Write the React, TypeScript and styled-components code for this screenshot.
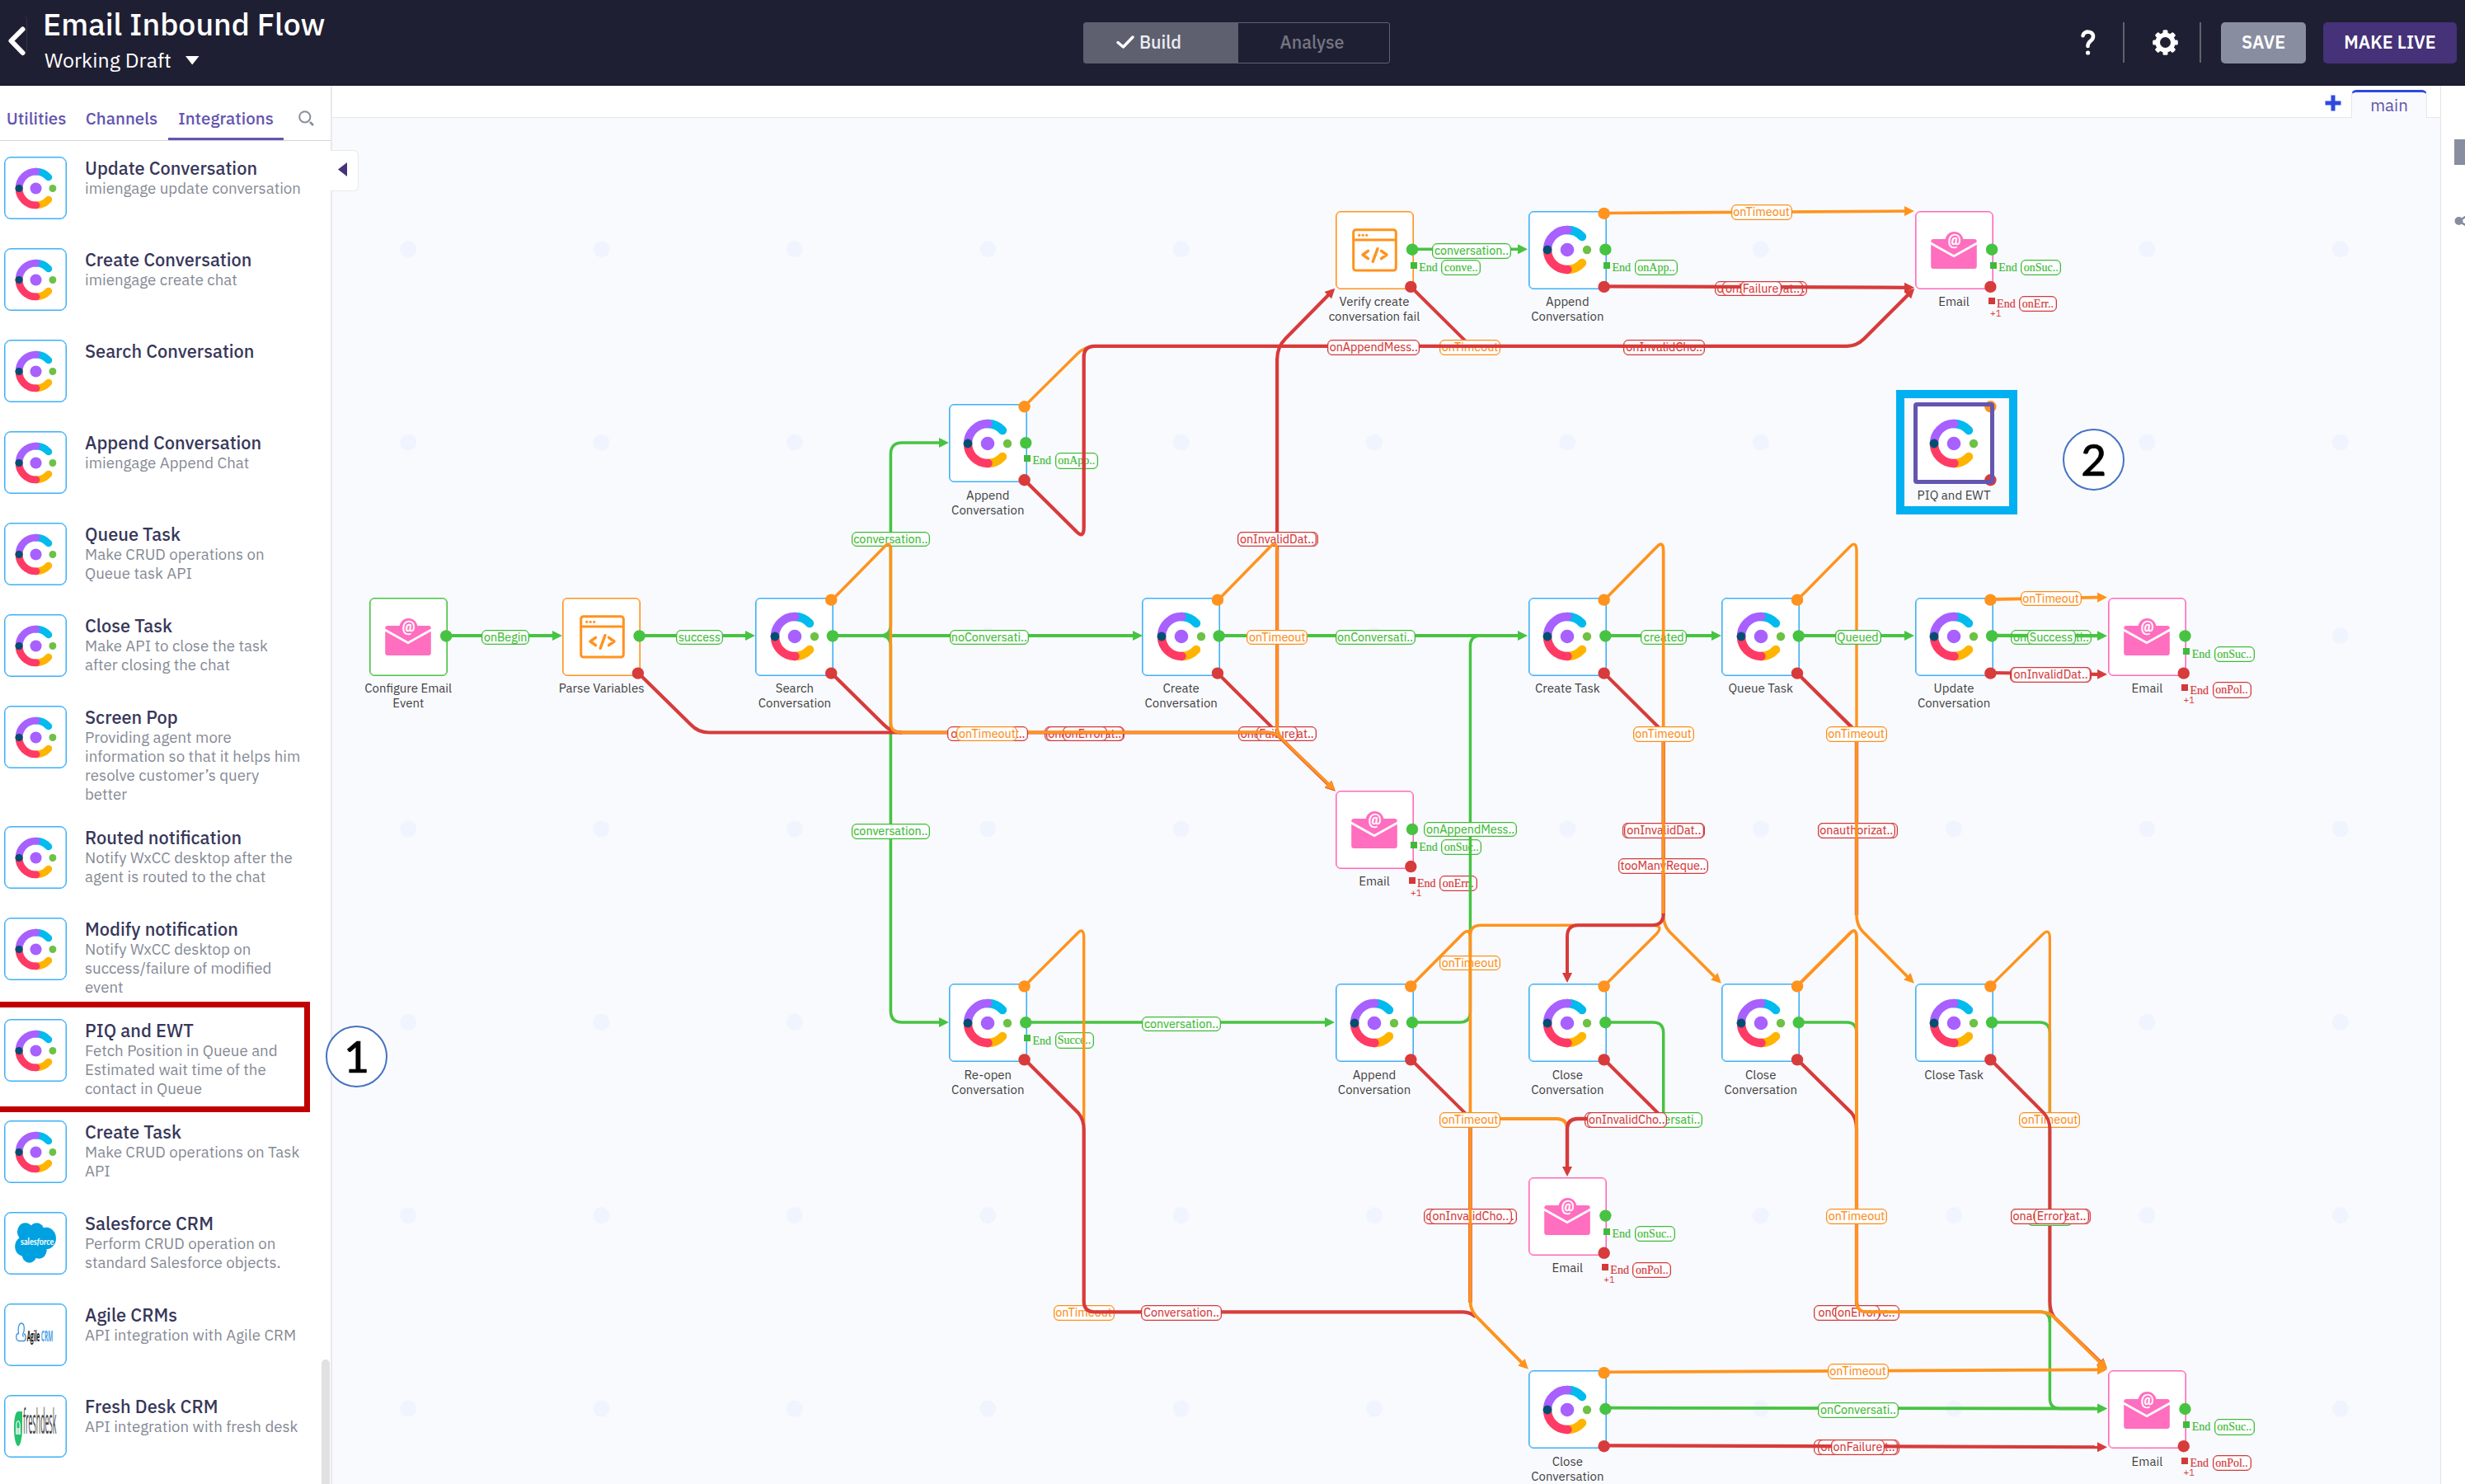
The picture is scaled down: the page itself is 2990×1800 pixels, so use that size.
import React from "react";
import styled, { createGlobalStyle, css } from "styled-components";

const GREEN = "#47c342";
const ORANGE = "#ff931e";
const RED = "#d83b3b";
const PILL_RED = "#d2393c";
const PINK = "#ff69bd";
const BLUE = "#3eb0f7";
const PURPLE = "#6355b0";

const Global = createGlobalStyle`
  html, body { margin: 0; padding: 0; background: #fff; }
  body { font-family: "IBM Plex Sans", Roboto, "Liberation Sans", sans-serif; overflow: hidden; }
  * { box-sizing: border-box; }
`;

const Page = styled.div`
  display: flex;
  flex-direction: column;
  width: 2990px;
  height: 1800px;
  overflow: hidden;
`;

/* ---------- header ---------- */

const Header = styled.header`
  display: grid;
  grid-template-columns: 1314px 372px 1fr;
  align-items: center;
  height: 104px;
  flex: none;
  background: #1f1f33;
  border-bottom: 1px solid #14142b;
  color: #fff;
`;
const HeaderLeft = styled.div`
  display: flex;
  height: 103px;
`;
const BackButton = styled.div`
  width: 33px;
  height: 48px;
  margin: 18px 19px 0 0;
  padding: 13px 0 0 9px;
  border-right: 1px solid #34344a;
  border-radius: 0 6px 6px 0;
`;
const FlowTitle = styled.h1`
  margin: 6px 0 0;
  font-size: 37.4px;
  line-height: 46px;
  font-weight: 500;
  white-space: nowrap;
`;
const DraftRow = styled.div`
  display: flex;
  align-items: center;
  gap: 17px;
  padding-left: 2px;
  margin-top: 6px;
  font-size: 25px;
  line-height: 30px;
`;
const Toggle = styled.div`
  display: grid;
  grid-template-columns: 187px 1fr;
  height: 50px;
  border: 1.4px solid #5e6070;
  border-radius: 3px;
  font-size: 21.5px;
  font-weight: 500;
  line-height: 47px;
`;
const ToggleItem = styled.div<{ $active?: boolean }>`
  display: flex;
  align-items: center;
  justify-content: center;
  gap: 6px;
  padding-right: ${(p) => (p.$active ? "30px" : "4px")};
  background: ${(p) => (p.$active ? "#5e6070" : "transparent")};
  color: ${(p) => (p.$active ? "#ededf0" : "#757582")};
`;
const HeaderRight = styled.div`
  display: flex;
  align-items: center;
  justify-content: flex-end;
  padding-right: 10px;
  height: 50px;
`;
const Divider = styled.i`
  width: 2px;
  height: 49px;
  background: #62626d;
`;
const IconSlot = styled.div<{ $l: number; $r: number }>`
  display: flex;
  margin: 0 ${(p) => p.$r}px 0 ${(p) => p.$l}px;
`;
const HeaderButton = styled.button<{ $bg: string; $w: number }>`
  width: ${(p) => p.$w}px;
  height: 50px;
  margin-left: 21px;
  padding: 0 0 1px;
  border: 0;
  border-radius: 5px;
  background: ${(p) => p.$bg};
  color: #fff;
  font-family: inherit;
  font-size: 21.5px;
  font-weight: 600;
`;

/* ---------- sidebar ---------- */

const Body = styled.div`
  display: flex;
  flex: 1;
  min-height: 0;
`;
const Sidebar = styled.aside`
  position: relative;
  width: 403px;
  flex: none;
  border-right: 2px solid #e9e9ec;
  background: #fff;
`;
const Tabs = styled.nav`
  display: flex;
  height: 67px;
  border-bottom: 1px solid #d6d6da;
`;
const Tab = styled.div<{ $w: number; $active?: boolean }>`
  width: ${(p) => p.$w}px;
  padding-top: 26px;
  height: 66px;
  font-size: 20.5px;
  line-height: 28px;
  font-weight: 500;
  text-align: center;
  color: ${PURPLE};
  border-bottom: 3px solid ${(p) => (p.$active ? PURPLE : "transparent")};
`;
const ChannelsTab = styled(Tab)`
  padding-left: 3px;
`;
const SearchSlot = styled.div`
  padding: 30px 0 0 18px;
`;
const Items = styled.div`
  padding-top: 19px;
`;
const Item = styled.div`
  display: flex;
  min-height: 111px;
  padding-left: 5px;
`;
const ItemIcon = styled.div`
  display: flex;
  align-items: center;
  justify-content: center;
  flex: none;
  width: 76px;
  height: 76px;
  border: 1px solid ${BLUE};
  box-shadow: inset 0 0 0 0.5px ${BLUE};
  border-radius: 8px;
  background: #fff;
`;
const ItemText = styled.div`
  margin-left: 22px;
  padding: 1px 0 26.6px;
`;
const ItemTitle = styled.div`
  height: 25.8px;
  font-size: 21.8px;
  line-height: 27px;
  font-weight: 500;
  color: #37375a;
  white-space: nowrap;
`;
const ItemDesc = styled.div`
  font-size: 18.7px;
  line-height: 23.2px;
  color: #868a95;
  white-space: pre;
`;
const Highlight = styled.div`
  position: absolute;
  left: -10px;
  top: 1111px;
  width: 386px;
  height: 134px;
  border: 7px solid #c00000;
`;
const Thumb = styled.div`
  position: absolute;
  left: 390px;
  top: 1545px;
  width: 10px;
  height: 170px;
  border-radius: 5px;
  background: #e1e1e1;
`;
const Collapse = styled.div`
  position: absolute;
  z-index: 5;
  left: 401px;
  top: 78px;
  width: 34px;
  height: 50px;
  padding: 14px 0 0 9px;
  background: #fff;
  border: 1.5px solid #e9e9ec;
  border-left: 0;
  border-radius: 0 6px 6px 0;
`;

/* ---------- canvas ---------- */

const Main = styled.main`
  display: flex;
  flex-direction: column;
  width: 2557px;
  flex: none;
`;
const FlowTabs = styled.div`
  display: flex;
  align-items: flex-end;
  justify-content: flex-end;
  height: 39px;
  padding-right: 16px;
  border-bottom: 1px solid #e7e7ea;
`;
const PlusSlot = styled.div`
  display: flex;
  margin: 0 12px 7px 0;
`;
const FlowTab = styled.div`
  width: 92px;
  height: 34px;
  margin-bottom: -1px;
  border: 1px solid #e7e7ea;
  border-top: 3px solid #2f49e0;
  border-bottom: 0;
  border-radius: 6px 6px 0 0;
  background: #f9fafd;
  color: ${PURPLE};
  font-size: 20.5px;
  line-height: 31px;
  text-align: center;
`;
const Canvas = styled.div`
  position: relative;
  flex: 1;
  overflow: hidden;
  background: #f9fafd;
`;
const World = styled.div`
  position: absolute;
  left: -403px;
  top: -143px;
  width: 2990px;
  height: 1800px;
`;
const Layer = styled.svg`
  position: absolute;
  left: 0;
  top: 0;
`;
const Spot = css<{ $x: number; $y: number }>`
  position: absolute;
  left: ${(p) => p.$x}px;
  top: ${(p) => p.$y}px;
`;
const NodeBox = styled.div<{ $x: number; $y: number }>`
  ${Spot}
  display: flex;
  flex-direction: column;
  align-items: center;
  width: 140px;
  margin: -47.5px 0 0 -70px;
`;
const NodeCard = styled.div<{ $color: string }>`
  display: flex;
  align-items: center;
  justify-content: center;
  width: 95px;
  height: 95px;
  border: 1px solid ${(p) => p.$color};
  box-shadow: inset 0 0 0 0.6px ${(p) => p.$color};
  border-radius: 6px;
  background: #fff;
`;
const NodeLabel = styled.div`
  margin-top: 6.5px;
  font-size: 15px;
  line-height: 18px;
  text-align: center;
  white-space: pre;
  color: #3f3f3f;
`;
const Pill = styled.div<{ $x: number; $y: number; $w: number; $color: string }>`
  ${Spot}
  width: ${(p) => p.$w}px;
  height: 18.6px;
  margin: -9.3px 0 0 ${(p) => -p.$w / 2}px;
  border: 1px solid ${(p) => p.$color};
  box-shadow: inset 0 0 0 0.3px ${(p) => p.$color};
  border-radius: 6px;
  background: #fff;
  color: ${(p) => p.$color};
  font-size: 14.3px;
  -webkit-text-stroke: 0.15px ${(p) => p.$color};
  line-height: 16.6px;
  text-align: center;
  white-space: nowrap;
`;
const EndRow = styled.div<{ $x: number; $y: number; $color: string }>`
  ${Spot}
  display: flex;
  align-items: center;
  height: 20px;
  margin-top: -10px;
  color: ${(p) => p.$color};
  -webkit-text-stroke: 0.2px ${(p) => p.$color};
  font-family: "Liberation Serif", serif;
  font-size: 14px;
  line-height: 17px;
`;
const EndSquare = styled.i`
  width: 8px;
  height: 8px;
  margin: -6px 2.5px 0 0;
  background: currentColor;
`;
const EndPill = styled.span<{ $w: number }>`
  width: ${(p) => p.$w}px;
  height: 19.3px;
  margin-left: 4.5px;
  border: 1px solid currentColor;
  box-shadow: inset 0 0 0 0.3px currentColor;
  border-radius: 6px;
  background: #fff;
  text-align: center;
`;
const PlusOne = styled.span<{ $x: number; $y: number }>`
  ${Spot}
  color: ${RED};
  font-size: 11.2px;
  line-height: 12px;
`;
const SelectedFrame = styled.div<{ $x: number; $y: number }>`
  ${Spot}
  width: 147px;
  height: 151px;
  border: 10px solid #00b0f0;
`;
const SelectedBorder = styled.div<{ $x: number; $y: number }>`
  ${Spot}
  width: 98px;
  height: 99px;
  border: 5px solid ${PURPLE};
  border-radius: 4px;
`;
const Callout = styled.div<{ $x: number; $y: number }>`
  ${Spot}
  z-index: 6;
  width: 75px;
  height: 75px;
  border: 2.6px solid #4472c4;
  border-radius: 50%;
  background: #fff;
  color: #000;
  font-family: Lato, "Open Sans", sans-serif;
  font-size: 53px;
  font-weight: 500;
  -webkit-text-stroke: 0.6px #000;
  line-height: 69px;
  text-align: center;
`;
const RightRail = styled.aside`
  width: 30px;
  flex: none;
  padding: 65px 0 0 16px;
  border-left: 1.5px solid #e4e4e8;
  background: #fff;
  overflow: hidden;
`;
const RailBlock = styled.div`
  width: 16px;
  height: 31px;
  margin-bottom: 56px;
  background: #898da0;
`;
const BodyWrap = styled(Body)`
  position: relative;
`;

/* ---------- drawings ---------- */

const ConnectLogo = ({ size }: { size: number }) => (
  <svg width={size} height={size} viewBox="-30 -30 60 60" fill="none" strokeWidth="10.4" strokeLinecap="round">
    <path d="M0-24A24 24 0 0 1 18-16" stroke="#00bbed" />
    <path d="M0 24A24 24 0 0 0 18 16" stroke="#ffb400" />
    <path d="M-24 0A24 24 0 0 1 0.5-24" stroke="#a860ff" />
    <path d="M-24 0A24 24 0 0 0 0.5 24" stroke="#ff3a65" />
    <circle cx="-24" r="5.4" fill="#004f73" />
    <circle r="8.3" fill="#a860ff" />
    <circle cx="24" r="5.2" fill="#6dc144" />
  </svg>
);

const EmailIcon = () => (
  <svg width="60" height="60" viewBox="-30 -30 60 60">
    <rect x="-27.8" y="-13" width="55.6" height="36" rx="3.2" fill="#ff6ebf" />
    <path d="M-29-8.5L0 7.6L29-8.5" fill="none" stroke="#fff" strokeWidth="2.8" />
    <circle cx="0.5" cy="-11" r="11" fill="#ff6ebf" />
    <text x="0.5" y="-6" textAnchor="middle" fontFamily="Roboto, sans-serif" fontSize="17.5" fontWeight="500" fill="#fff" stroke="#fff" strokeWidth="0.4">
      @
    </text>
  </svg>
);

const CodeIcon = () => (
  <svg width="60" height="60" viewBox="-30 -30 60 60" fill="none" stroke={ORANGE} strokeLinecap="round" strokeLinejoin="round">
    <rect x="-25.3" y="-24.3" width="51.6" height="49.3" rx="3" strokeWidth="3" />
    <path d="M-25-12H26" strokeWidth="3" />
    <g fill={ORANGE} stroke="none">
      <circle cx="-18.3" cy="-17.7" r="1.6" />
      <circle cx="-13.8" cy="-17.7" r="1.6" />
      <circle cx="-9.3" cy="-17.7" r="1.6" />
    </g>
    <path d="M-7.5 1.3L-14 6L-7.5 10.7M8.5 1.3L15 6L8.5 10.7M4-1.3L-1.8 14.3" strokeWidth="3.4" />
  </svg>
);

const SalesforceIcon = () => (
  <svg width="52" height="52" viewBox="0 0 52 52">
    <g fill="#00a1e0" transform="translate(0 -2) scale(0.98 1.1)">
      <circle cx="14" cy="13" r="10" />
      <circle cx="28" cy="12.5" r="9.5" />
      <circle cx="40" cy="20" r="12" />
      <circle cx="12" cy="29" r="10.8" />
      <circle cx="19" cy="38" r="9" />
      <circle cx="31" cy="33" r="9.5" />
      <rect x="10" y="12" width="28" height="24" />
    </g>
    <text x="8" y="28" fontFamily="Lato, sans-serif" fontSize="12" fontWeight="700" fill="#fff" transform="translate(8 0) scale(0.76 1) translate(-8 0)">
      sales<tspan fontStyle="italic">f</tspan>orce
    </text>
  </svg>
);

const AgileIcon = () => (
  <svg width="52" height="52" viewBox="0 0 52 52" overflow="visible">
    <path d="M6 33.5C1.5 33 2 24.5 5.5 24.5C4.5 19 5.5 12 9 12C12 12 13 17 12 22C10.5 25 10 27 11.5 28.5M6 33.5H12.5C15 32 14.5 25 12 25" fill="none" stroke="#3d93e0" strokeWidth="1.3" />
    <text x="0" y="0" fontFamily="Open Sans, sans-serif" fontSize="18" fontWeight="700" fill="#111" transform="translate(15.7 33.6) scale(0.355 1)">
      Agile
    </text>
    <text x="0" y="0" fontFamily="Open Sans, sans-serif" fontSize="18" fontWeight="700" fill="#4aa0e6" transform="translate(32.8 33.6) scale(0.36 1)">
      CRM
    </text>
  </svg>
);

const FreshdeskIcon = () => (
  <svg width="52" height="52" viewBox="0 0 52 52" overflow="visible">
    <path d="M5 8H10V29A5 21 0 1 1 0 29C0 15 2 8 5 8Z" fill="#25c16f" />
    <path d="M2.8 36V25C3 18 7 18 7.2 25V36M4.2 36V28M6 36V28" fill="none" stroke="#fff" strokeWidth="1.1" />
    <text x="0" y="0" fontFamily="Open Sans, sans-serif" fontSize="18" fill="#444" transform="translate(11 35) scale(0.49 2.35)">
      freshdesk
    </text>
  </svg>
);

const Gear = () => (
  <svg width="31" height="31" viewBox="-15.5 -15.5 31 31">
    <g fill="#fff">
      {[0, 45, 90, 135].map((a) => (
        <rect key={a} x="-3" y="-15.3" width="6" height="30.6" rx="1.6" transform={`rotate(${a})`} />
      ))}
    </g>
    <circle r="9.3" fill="#1f1f33" stroke="#fff" strokeWidth="5.6" />
  </svg>
);

/* ---------- data ---------- */

const tools: { icon: string; title: string; desc: string }[] = [
  { icon: "c", title: "Update Conversation", desc: "imiengage update conversation" },
  { icon: "c", title: "Create Conversation", desc: "imiengage create chat" },
  { icon: "c", title: "Search Conversation", desc: "" },
  { icon: "c", title: "Append Conversation", desc: "imiengage Append Chat" },
  { icon: "c", title: "Queue Task", desc: "Make CRUD operations on\nQueue task API" },
  { icon: "c", title: "Close Task", desc: "Make API to close the task\nafter closing the chat" },
  { icon: "c", title: "Screen Pop", desc: "Providing agent more\ninformation so that it helps him\nresolve customer’s query\nbetter" },
  { icon: "c", title: "Routed notification", desc: "Notify WxCC desktop after the\nagent is routed to the chat" },
  { icon: "c", title: "Modify notification", desc: "Notify WxCC desktop on\nsuccess/failure of modified\nevent" },
  { icon: "c", title: "PIQ and EWT", desc: "Fetch Position in Queue and\nEstimated wait time of the\ncontact in Queue" },
  { icon: "c", title: "Create Task", desc: "Make CRUD operations on Task\nAPI" },
  { icon: "s", title: "Salesforce CRM", desc: "Perform CRUD operation on\nstandard Salesforce objects." },
  { icon: "a", title: "Agile CRMs", desc: "API integration with Agile CRM" },
  { icon: "f", title: "Fresh Desk CRM", desc: "API integration with fresh desk" },
];

const toolIcon: Record<string, React.ReactNode> = {
  c: <ConnectLogo size={51} />,
  s: <SalesforceIcon />,
  a: <AgileIcon />,
  f: <FreshdeskIcon />,
};

const colX = (k: number) => 495.2 + 234.36 * k;
const rowY = (j: number) => 303.3 + 234.38 * j;

type FlowNode = {
  c: number;
  r: number;
  kind: "connect" | "email" | "code";
  label: string;
  border?: string;
  ports: string;
  ok?: [string, number];
  err?: [string, number];
};

const nodes: FlowNode[] = [
  { c: 5, r: 0, kind: "code", label: "Verify create\nconversation fail", ports: "gr", ok: ["conve..", 48] },
  { c: 6, r: 0, kind: "connect", label: "Append\nConversation", ports: "ogr", ok: ["onApp..", 52.5] },
  { c: 8, r: 0, kind: "email", label: "Email", ports: "gr", ok: ["onSuc..", 49], err: ["onErr..", 45.5] },
  { c: 3, r: 1, kind: "connect", label: "Append\nConversation", ports: "ogr", ok: ["onApp..", 52.5] },
  { c: 8, r: 1, kind: "connect", label: "PIQ and EWT", ports: "or" },
  { c: 0, r: 2, kind: "email", label: "Configure Email\nEvent", border: GREEN, ports: "g" },
  { c: 1, r: 2, kind: "code", label: "Parse Variables", ports: "gr" },
  { c: 2, r: 2, kind: "connect", label: "Search\nConversation", ports: "ogr" },
  { c: 4, r: 2, kind: "connect", label: "Create\nConversation", ports: "ogr" },
  { c: 6, r: 2, kind: "connect", label: "Create Task", ports: "ogr" },
  { c: 7, r: 2, kind: "connect", label: "Queue Task", ports: "ogr" },
  { c: 8, r: 2, kind: "connect", label: "Update\nConversation", ports: "ogr" },
  { c: 9, r: 2, kind: "email", label: "Email", ports: "gr", ok: ["onSuc..", 49], err: ["onPol..", 47] },
  { c: 5, r: 3, kind: "email", label: "Email", ports: "gr", ok: ["onSuc..", 49], err: ["onErr..", 45.5] },
  { c: 3, r: 4, kind: "connect", label: "Re-open\nConversation", ports: "ogr", ok: ["Succe..", 47] },
  { c: 5, r: 4, kind: "connect", label: "Append\nConversation", ports: "ogr" },
  { c: 6, r: 4, kind: "connect", label: "Close\nConversation", ports: "ogr" },
  { c: 7, r: 4, kind: "connect", label: "Close\nConversation", ports: "ogr" },
  { c: 8, r: 4, kind: "connect", label: "Close Task", ports: "ogr" },
  { c: 6, r: 5, kind: "email", label: "Email", ports: "gr", ok: ["onSuc..", 49], err: ["onPol..", 47] },
  { c: 6, r: 6, kind: "connect", label: "Close\nConversation", ports: "ogr" },
  { c: 9, r: 6, kind: "email", label: "Email", ports: "gr", ok: ["onSuc..", 49], err: ["onPol..", 47] },
];

const borderOf = { connect: BLUE, email: PINK, code: ORANGE };
const colorOf: Record<string, string> = { g: GREEN, o: ORANGE, r: RED };
const pillColor: Record<string, string> = { g: "#3fbb3a", o: "#f98f1d", r: PILL_RED };

// [color, path, width, arrow]
type Edge = [string, string, number, boolean?];
// [color, text, x, y, width]
type Tag = [string, string, number, number, number];

const stage1: Edge[] = [
  ["g", "M1713 302.3H1849", 3.4, true],
  ["o", "M1946 258.5L2318 256", 3.6, true],
  ["r", "M1711.5 348L1783 419", 4],
  ["r", "M1477 816.5L1549 888.3", 4],
  ["r", "M1549.1 888V436Q1549.1 421 1559 411L1616.5 352.5", 4.2, true],
  ["g", "M541 771H678", 4, true],
  ["g", "M776 771H912", 4, true],
  ["g", "M1010 771H1068Q1080.4 771 1080.4 758V551Q1080.4 537 1094 537H1147", 3.6, true],
  ["g", "M1010 771H1068Q1080.4 771 1080.4 784V1226Q1080.4 1240 1094 1240H1147", 3.6, true],
  ["g", "M1010 771H1382", 3.8, true],
  ["g", "M1479 771H1849", 3.8, true],
  ["g", "M1713 1240H1771Q1783.4 1240 1783.4 1227V784Q1783.4 771 1796 771", 3.5],
  ["g", "M1948 771H2084", 3.8, true],
  ["g", "M1948 1240H2005Q2017.7 1240 2017.7 1253V1356", 3.5],
  ["g", "M2182 1240H2240Q2252 1240 2252 1253V1578Q2252 1591 2264 1591H2474Q2486.4 1591 2486.4 1604", 3.5],
  ["g", "M2416 1240H2474Q2486.4 1240 2486.4 1253V1696Q2486.4 1708.5 2499 1708.5H2552", 3.5, true],
  ["r", "M1945.8 816.5L2017.7 888", 4],
  ["r", "M2180 816.5L2252 888V1110", 4.4],
  ["r", "M2017.7 888V1110", 4.4],
  ["r", "M1945.8 1285L2017 1356", 4],
  ["r", "M1711.5 1285L1783 1356", 4],
  ["r", "M1783.4 1356V1580", 4.6],
  ["r", "M2180 1285L2246 1350Q2252 1357 2252 1370V1578Q2252 1591 2264 1591", 4.2],
  ["o", "M2180 728L2244 663Q2252 655 2252 669V890", 3.4],
  ["o", "M2414.4 1196L2478 1133Q2486.4 1125 2486.4 1139V1590", 3.2],
  ["g", "M1244 1240H1615", 3.4, true],
  ["o", "M1242.8 1196L1307 1132Q1314.7 1124 1314.7 1138V1590", 3.4],
];

const tags1: Tag[] = [
  ["g", "conversation..", 1785, 304.4, 95.6],
  ["o", "onTimeout", 2136.5, 257.3, 74],
  ["r", "onAppendMess..", 2136, 350, 112],
  ["r", "onInvalidDat..", 2138, 350, 98],
  ["o", "onTimeout", 1783, 421.5, 74],
  ["r", "onInvalidCho..", 2018.6, 421.5, 98.6],
  ["g", "conversation..", 1080.4, 654.2, 95.6],
  ["r", "onInvalidDat..", 1550, 654.2, 97.5],
  ["r", "onInvalidDat..", 1549, 654.2, 95.6],
  ["g", "onBegin", 613.2, 773, 58],
  ["g", "success", 848.4, 773, 56.5],
  ["g", "noConversati..", 1199.8, 773, 96.6],
  ["g", "onConversati..", 1668, 773, 97],
  ["g", "created", 2018.2, 773, 56.5],
  ["g", "Queued", 2253.5, 773, 56],
  ["g", "onConversati..", 2488, 773, 97.5],
  ["r", "onInvalidDat..", 1315.6, 890, 97.5],
  ["r", "onauthorizat..", 1315.8, 890, 94.6],
  ["r", "onError", 1315.6, 890, 54],
  ["r", "onauthorizat..", 1549.3, 890, 94.6],
  ["r", "Failure", 1549, 890, 50],
  ["g", "conversation..", 1080.4, 1008.6, 95.6],
  ["g", "onAppendMess..", 1783.6, 1005.8, 112.3],
  ["r", "onInvalidCho..", 2018, 1007.3, 99.5],
  ["r", "onInvalidDat..", 2018.3, 1007.3, 96.5],
  ["r", "tooManyReque..", 2017.5, 1050.7, 109],
  ["r", "onInvalidDat..", 2253, 1007.3, 97],
  ["r", "onauthorizat..", 2251.8, 1007.3, 94.6],
  ["o", "onTimeout", 1783, 1168, 74],
  ["g", "conversation..", 1433, 1242, 95.6],
  ["g", "onConversati..", 2016.4, 1358.5, 97.5],
  ["r", "onInvalidDat..", 1971, 1358.5, 98.6],
  ["r", "onAppendMess..", 1783.2, 1475.7, 113],
  ["r", "onInvalidCho..", 1783.8, 1475.7, 100],
  ["o", "onTimeout", 2486, 1358.5, 74],
  ["o", "onTimeout", 1314.5, 1592.7, 74],
  ["r", "onChatActive..", 2252, 1592.7, 104],
  ["r", "onError", 2253, 1592.7, 54],
  ["r", "onChatActive..", 2252, 1755.5, 104],
  ["r", "onInvalidDat..", 2253.5, 1755.5, 97],
];

const stage2: Edge[] = [
  ["o", "M1242.5 493L1307 429Q1316 420 1330 420", 3.4],
  ["r", "M1242.5 582L1307 646Q1314.7 653 1314.7 639V433Q1314.7 419.8 1328 419.8H2240Q2252 419.8 2261 411L2319.5 352.5", 4.3, true],
  ["r", "M1946 347.3L2318 348.8", 4.2, true],
  ["r", "M774.4 816.5L838 879Q847 888.5 860 888.5H1536Q1545 888.5 1552 894L1617 957", 4.2, true],
  ["r", "M1008.7 816.5L1072 879Q1081 888.5 1094 888.5", 4.2],
  ["o", "M1009 728L1073 663Q1080.4 655 1080.4 669V876Q1080.4 888.3 1092 888.3H1536Q1546 888.3 1553 894.5L1616.5 956", 3.5, true],
  ["o", "M1477.4 728L1541 663Q1549.1 655 1549.1 669V880Q1549.1 890 1556 897", 3.5],
  ["g", "M2182 771H2318", 3.8, true],
  ["o", "M2414.4 727L2552 724.5", 3.8, true],
  ["g", "M2416 770.8L2552 771.2", 4.2, true],
  ["r", "M2414 816L2552 818", 4.2, true],
  ["o", "M1945.8 728L2010 663Q2017.7 655 2017.7 669V1110Q2017.7 1122 2025 1130L2085 1190", 3.7, true],
  ["o", "M2252 890V1110Q2252 1122 2259.5 1130L2319 1190", 3.7, true],
  ["o", "M1945.8 1196L2010 1132Q2018 1122.3 2004 1122.3H1796Q1783.4 1122.3 1783.4 1135", 3.4],
  ["r", "M2017.7 1108Q2017.7 1122.3 2004 1122.3H1914Q1901 1122.3 1901 1136V1188", 4, true],
  ["o", "M1711.5 1196L1774 1133Q1783.4 1124 1783.4 1138V1578Q1783.4 1588 1790 1596L1851 1658", 3.7, true],
  ["o", "M1783.4 1357H1888Q1901 1357 1901 1370", 4],
  ["r", "M1925 1357H1914Q1901 1357 1901 1370V1423", 4.4, true],
  ["r", "M1243 1285L1308 1350Q1314.7 1358 1314.7 1370V1578Q1314.7 1591.3 1328 1591.3H1774Q1783 1591.3 1790 1597", 4.2],
  ["o", "M1783.4 1570V1578Q1783.4 1588 1790 1596L1851 1658", 3.5],
  ["r", "M2414.4 1285L2479 1350Q2486.4 1358 2486.4 1370V1578Q2486.4 1592 2493 1599L2553 1657", 4, true],
  ["o", "M2180 1196L2244 1132Q2252 1124 2252 1138V1578Q2252 1591.3 2264 1591.3H2474Q2484 1591.3 2491 1597L2553 1658", 3.9, true],
  ["o", "M1945.8 1664.3L2552 1661.3", 3.6, true],
  ["g", "M1948 1707.7L2552 1708.5", 3.8, true],
  ["r", "M1946 1753.3L2552 1755.3", 4.2, true],
];

const tags2: Tag[] = [
  ["r", "Failure", 2135.5, 350, 50],
  ["r", "onAppendMess..", 1666.3, 421.5, 112],
  ["o", "onTimeout", 1549.2, 773, 74],
  ["o", "onTimeout", 2487.6, 726, 74],
  ["g", "Success", 2488, 773, 59],
  ["r", "onInvalidCho..", 2487.6, 818.3, 98.5],
  ["r", "onInvalidDat..", 2487.6, 818.3, 96.5],
  ["r", "onInvalidDat..", 1198.4, 890, 98],
  ["o", "onTimeout", 1197.4, 890, 74],
  ["o", "onTimeout", 2017.5, 890.3, 74],
  ["o", "onTimeout", 2251.6, 890.3, 74],
  ["g", "Queued", 2253.5, 773, 56],
  ["o", "onTimeout", 1783, 1358.5, 74],
  ["r", "onInvalidCho..", 1973.3, 1358.5, 97.6],
  ["o", "onTimeout", 2252, 1475.7, 74],
  ["g", "success", 2486.4, 1477.5, 55],
  ["r", "onInvalidDat..", 2487, 1475.7, 97],
  ["r", "onauthorizat..", 2486, 1475.7, 95],
  ["r", "Error", 2486.7, 1475.7, 39],
  ["r", "Conversation..", 1433, 1592.7, 97.6],
  ["o", "onTimeout", 2253.5, 1663.5, 74],
  ["g", "onConversati..", 2254, 1710.3, 97.3],
  ["r", "onFailure", 2253.5, 1755.5, 65.5],
];

const EdgeLayer = ({ id, edges }: { id: string; edges: Edge[] }) => (
  <Layer width="2990" height="1800" viewBox="0 0 2990 1800" fill="none">
    <defs>
      {Object.keys(colorOf).map((k) => (
        <marker key={k} id={`${id}-${k}`} viewBox="0 0 12 12" refX="8" refY="6" markerWidth="12" markerHeight="12" markerUnits="userSpaceOnUse" orient="auto">
          <path d="M0 0L12 6L0 12Z" fill={colorOf[k]} />
        </marker>
      ))}
    </defs>
    {edges.map(([c, d, w, arrow], i) => (
      <path key={i} d={d} stroke={colorOf[c]} strokeWidth={w} markerEnd={arrow ? `url(#${id}-${c})` : undefined} />
    ))}
  </Layer>
);

const Tags = ({ tags }: { tags: Tag[] }) => (
  <>
    {tags.map(([c, text, x, y, w], i) => (
      <Pill key={i} $x={x} $y={y} $w={w} $color={pillColor[c]}>
        {text}
      </Pill>
    ))}
  </>
);

const dots: [number, number][] = [];
for (let j = 0; j < 7; j++) for (let k = 0; k < 11; k++) dots.push([colX(k), rowY(j) - 1]);

export default function App() {
  return (
    <Page>
      <Global />
      <Header>
        <HeaderLeft>
          <BackButton>
            <svg width="24" height="38" viewBox="0 0 24 38" fill="none" stroke="#fff" strokeWidth="6" strokeLinecap="round" strokeLinejoin="round">
              <path d="M18.5 4.5L4.5 18.5L18.5 33" />
            </svg>
          </BackButton>
          <div>
            <FlowTitle>Email Inbound Flow</FlowTitle>
            <DraftRow>
              Working Draft
              <svg width="17" height="11" viewBox="0 0 17 11">
                <path d="M0 0H16.5L8.2 10.6Z" fill="#fff" />
              </svg>
            </DraftRow>
          </div>
        </HeaderLeft>
        <Toggle>
          <ToggleItem $active>
            <svg width="22" height="18" viewBox="0 0 22 18" fill="none" stroke="#fff" strokeWidth="3.4" strokeLinecap="round" strokeLinejoin="round">
              <path d="M2 8.5L8.5 14L20 2" />
            </svg>
            Build
          </ToggleItem>
          <ToggleItem>Analyse</ToggleItem>
        </Toggle>
        <HeaderRight>
          <IconSlot $l={0} $r={33}>
            <svg width="18" height="31" viewBox="0 0 18 31" fill="none" stroke="#fff" strokeWidth="4.6" strokeLinecap="round">
              <path d="M2.6 7.2C3.5 1 15 1 15 8.2C15 14 8.5 13 8.5 20" />
              <circle cx="8.6" cy="28" r="2.6" fill="#fff" stroke="none" />
            </svg>
          </IconSlot>
          <Divider />
          <IconSlot $l={34} $r={26}>
            <Gear />
          </IconSlot>
          <Divider />
          <IconSlot $l={3} $r={0} />
          <HeaderButton $bg="#898da0" $w={103}>SAVE</HeaderButton>
          <HeaderButton $bg="#453278" $w={162}>MAKE LIVE</HeaderButton>
        </HeaderRight>
      </Header>
      <BodyWrap>
        <Sidebar>
          <Tabs>
            <Tab $w={88}>Utilities</Tab>
            <ChannelsTab $w={116}>Channels</ChannelsTab>
            <Tab $w={140} $active>Integrations</Tab>
            <SearchSlot>
              <svg width="19" height="19" viewBox="0 0 19 19" fill="none" stroke="#8a8e9c" strokeWidth="2">
                <circle cx="7.8" cy="7.8" r="6.6" />
                <path d="M14 14L18 18" strokeWidth="2.6" />
              </svg>
            </SearchSlot>
          </Tabs>
          <Items>
            {tools.map((t) => (
              <Item key={t.title}>
                <ItemIcon>{toolIcon[t.icon]}</ItemIcon>
                <ItemText>
                  <ItemTitle>{t.title}</ItemTitle>
                  <ItemDesc>{t.desc}</ItemDesc>
                </ItemText>
              </Item>
            ))}
          </Items>
          <Highlight />
          <Thumb />
        </Sidebar>
        <Collapse>
          <svg width="11" height="17" viewBox="0 0 11 17">
            <path d="M11 0V17L0 8.5Z" fill="#453278" />
          </svg>
        </Collapse>
        <Main>
          <FlowTabs>
            <PlusSlot>
              <svg width="20" height="20" viewBox="0 0 20 20" stroke="#2f49e0" strokeWidth="5">
                <path d="M10 0.5V19.5M0.5 10H19.5" />
              </svg>
            </PlusSlot>
            <FlowTab>main</FlowTab>
          </FlowTabs>
          <Canvas>
            <World>
              <Layer width="2990" height="1800" viewBox="0 0 2990 1800">
                {dots.map(([x, y], i) => (
                  <circle key={i} cx={x} cy={y} r="10" fill="#eff4fe" />
                ))}
              </Layer>
              {nodes.map((n, i) => {
                const x = colX(n.c);
                const y = rowY(n.r);
                return (
                  <React.Fragment key={i}>
                    <NodeBox $x={x} $y={y}>
                      <NodeCard $color={n.border ?? borderOf[n.kind]}>
                        {n.kind === "connect" ? <ConnectLogo size={60} /> : n.kind === "email" ? <EmailIcon /> : <CodeIcon />}
                      </NodeCard>
                      <NodeLabel>{n.label}</NodeLabel>
                    </NodeBox>
                    {n.ok && (
                      <EndRow $x={x + 43.7} $y={y + 21.3} $color={pillColor.g}>
                        <EndSquare />
                        End
                        <EndPill $w={n.ok[1]}>{n.ok[0]}</EndPill>
                      </EndRow>
                    )}
                    {n.err && (
                      <>
                        <EndRow $x={x + 41.5} $y={y + 65} $color={PILL_RED}>
                          <EndSquare />
                          End
                          <EndPill $w={n.err[1]}>{n.err[0]}</EndPill>
                        </EndRow>
                        <PlusOne $x={x + 44} $y={y + 70.5}>+1</PlusOne>
                      </>
                    )}
                  </React.Fragment>
                );
              })}
              <EdgeLayer id="a" edges={stage1} />
              <Tags tags={tags1} />
              <EdgeLayer id="b" edges={stage2} />
              <Tags tags={tags2} />
              <Layer width="2990" height="1800" viewBox="0 0 2990 1800">
                {nodes.map((n, i) =>
                  n.ports.split("").map((p) => (
                    <circle
                      key={i + p}
                      cx={colX(n.c) + (p === "g" ? 46 : 44.3)}
                      cy={rowY(n.r) + (p === "g" ? -0.6 : p === "o" ? -44.4 : 44.6)}
                      r="7.2"
                      fill={colorOf[p]}
                    />
                  ))
                )}
              </Layer>
              <SelectedBorder $x={2321} $y={488} />
              <SelectedFrame $x={2300} $y={473} />
              <Callout $x={2502} $y={520}>2</Callout>
            </World>
          </Canvas>
        </Main>
        <RightRail>
          <RailBlock />
          <svg width="20" height="24" viewBox="0 0 20 24" stroke="#898da0" strokeWidth="2.6">
            <circle cx="5.5" cy="12" r="5" fill="#898da0" stroke="none" />
            <path d="M5.5 12L15 6M5.5 12L15 18" />
          </svg>
        </RightRail>
        <CalloutOne>1</CalloutOne>
      </BodyWrap>
    </Page>
  );
}

const CalloutOne = styled(Callout).attrs({ $x: 395, $y: 1140 })``;
